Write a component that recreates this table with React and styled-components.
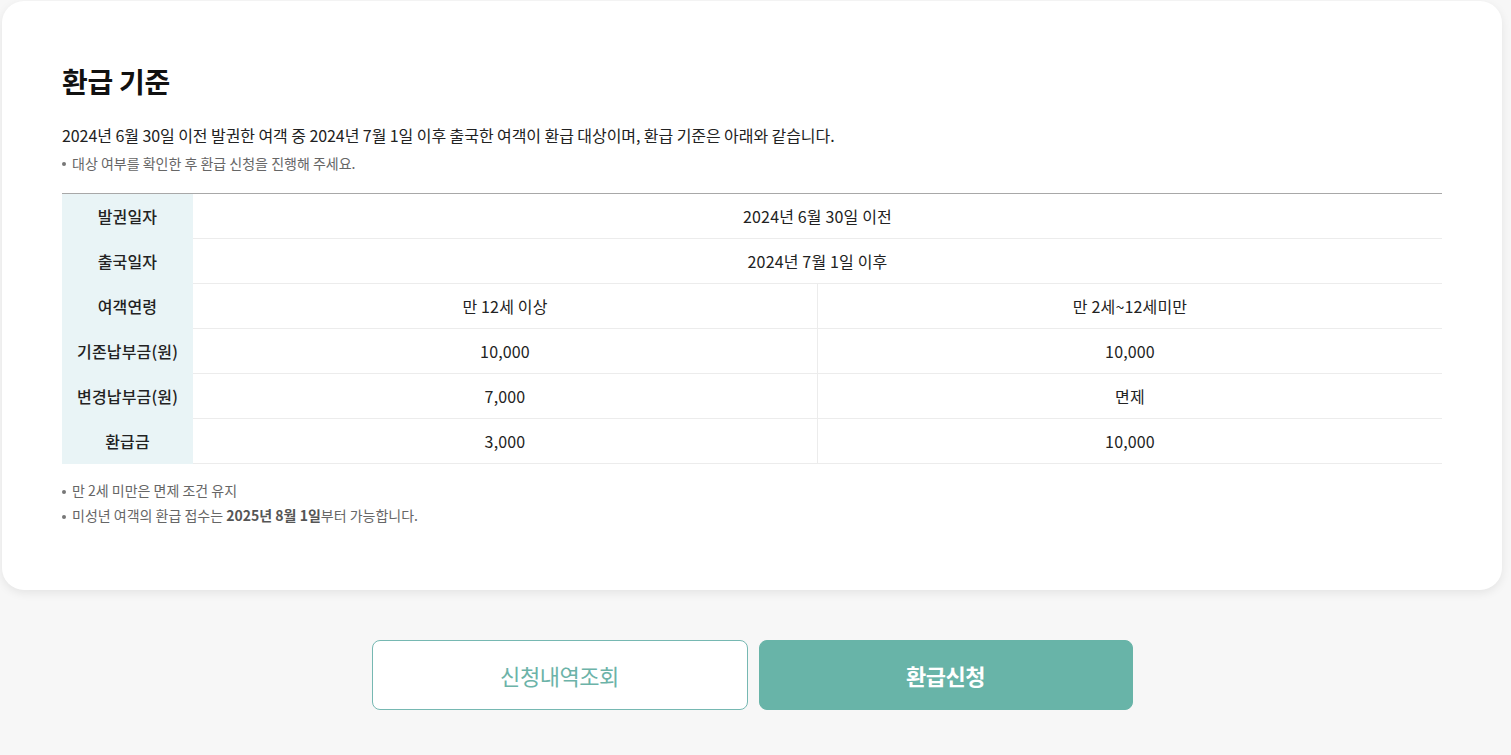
import styled, { createGlobalStyle } from 'styled-components'

const GlobalStyle = createGlobalStyle`
  html, body {
    margin: 0;
    padding: 0;
    background: #f7f7f7;
  }
  body {
    font-family: "Noto Sans CJK KR", Inter, "Noto Sans", sans-serif;
    color: #222;
  }
`

const Page = styled.div`
  padding: 1px 9px 45px 2px;
`

const Card = styled.section`
  background: #fff;
  border-radius: 22px;
  box-shadow: 0 3px 10px rgba(0, 0, 0, 0.08);
  padding: 62px 60px 62px;
`

const Title = styled.h2`
  margin: 0;
  font-size: 28px;
  line-height: 36px;
  font-weight: 700;
  letter-spacing: -0.01em;
  color: #111;
`

const Lead = styled.p`
  margin: 24px 0 0;
  font-size: 16px;
  line-height: 24px;
  letter-spacing: -0.07px;
  color: #222;
`

const Notes = styled.ul`
  list-style: none;
  margin: ${p => p.$top}px 0 0;
  padding: 0;
`

const Note = styled.li`
  position: relative;
  padding-left: 10px;
  font-size: 14px;
  line-height: ${p => p.$lh || 25}px;
  color: #666;

  &::before {
    content: '';
    position: absolute;
    left: 0;
    top: 50%;
    width: 4px;
    height: 4px;
    margin-top: -1px;
    border-radius: 50%;
    background: #777;
  }

  b {
    font-weight: 700;
    color: #555;
  }
`

const Table = styled.table`
  width: 100%;
  margin-top: 20px;
  table-layout: fixed;
  border-collapse: collapse;
  border-top: 1px solid #a8a8a8;
  font-size: 16px;
  letter-spacing: 0.01em;
`

const HeadCol = styled.col`
  width: 131px;
`

const Th = styled.th`
  height: 44px;
  padding: 0;
  background: #e9f4f6;
  font-weight: 500;
  color: #222;
  text-align: center;
  white-space: nowrap;
`

const Td = styled.td`
  height: 44px;
  padding: 0;
  text-align: center;
  color: #222;
  border-bottom: 1px solid #ececec;
  & + & {
    border-left: 1px solid #ececec;
  }
`

const Actions = styled.div`
  display: flex;
  justify-content: center;
  gap: 11px;
  margin-top: 50px;
`

const Button = styled.button`
  width: ${p => p.$w}px;
  height: 70px;
  border-radius: 8px;
  font-family: inherit;
  font-size: 22px;
  letter-spacing: -0.02em;
  cursor: pointer;
  border: 1px solid ${p => (p.$primary ? '#68b4a8' : '#76b8b2')};
  background: ${p => (p.$primary ? '#68b4a8' : '#fff')};
  color: ${p => (p.$primary ? '#fff' : '#6cb3a8')};
  font-weight: ${p => (p.$primary ? 700 : 400)};
`

const rows = [
  ['발권일자', ['2024년 6월 30일 이전']],
  ['출국일자', ['2024년 7월 1일 이후']],
  ['여객연령', ['만 12세 이상', '만 2세~12세미만']],
  ['기존납부금(원)', ['10,000', '10,000']],
  ['변경납부금(원)', ['7,000', '면제']],
  ['환급금', ['3,000', '10,000']],
]

export default function App() {
  return (
    <>
      <GlobalStyle />
      <Page>
        <Card>
          <Title>환급 기준</Title>
          <Lead>
            2024년 6월 30일 이전 발권한 여객 중 2024년 7월 1일 이후 출국한 여객이 환급 대상이며, 환급 기준은 아래와 같습니다.
          </Lead>
          <Notes $top={6}>
            <Note $lh={20}>대상 여부를 확인한 후 환급 신청을 진행해 주세요.</Note>
          </Notes>
          <Table>
            <colgroup>
              <HeadCol />
              <col />
              <col />
            </colgroup>
            <tbody>
              {rows.map(([head, cells]) => (
                <tr key={head}>
                  <Th>{head}</Th>
                  {cells.map((c, i) => (
                    <Td key={i} colSpan={cells.length === 1 ? 2 : 1}>
                      {c}
                    </Td>
                  ))}
                </tr>
              ))}
            </tbody>
          </Table>
          <Notes $top={14}>
            <Note>만 2세 미만은 면제 조건 유지</Note>
            <Note>
              미성년 여객의 환급 접수는 <b>2025년 8월 1일</b>부터 가능합니다.
            </Note>
          </Notes>
        </Card>
        <Actions>
          <Button $w={376}>신청내역조회</Button>
          <Button $w={374} $primary>환급신청</Button>
        </Actions>
      </Page>
    </>
  )
}
